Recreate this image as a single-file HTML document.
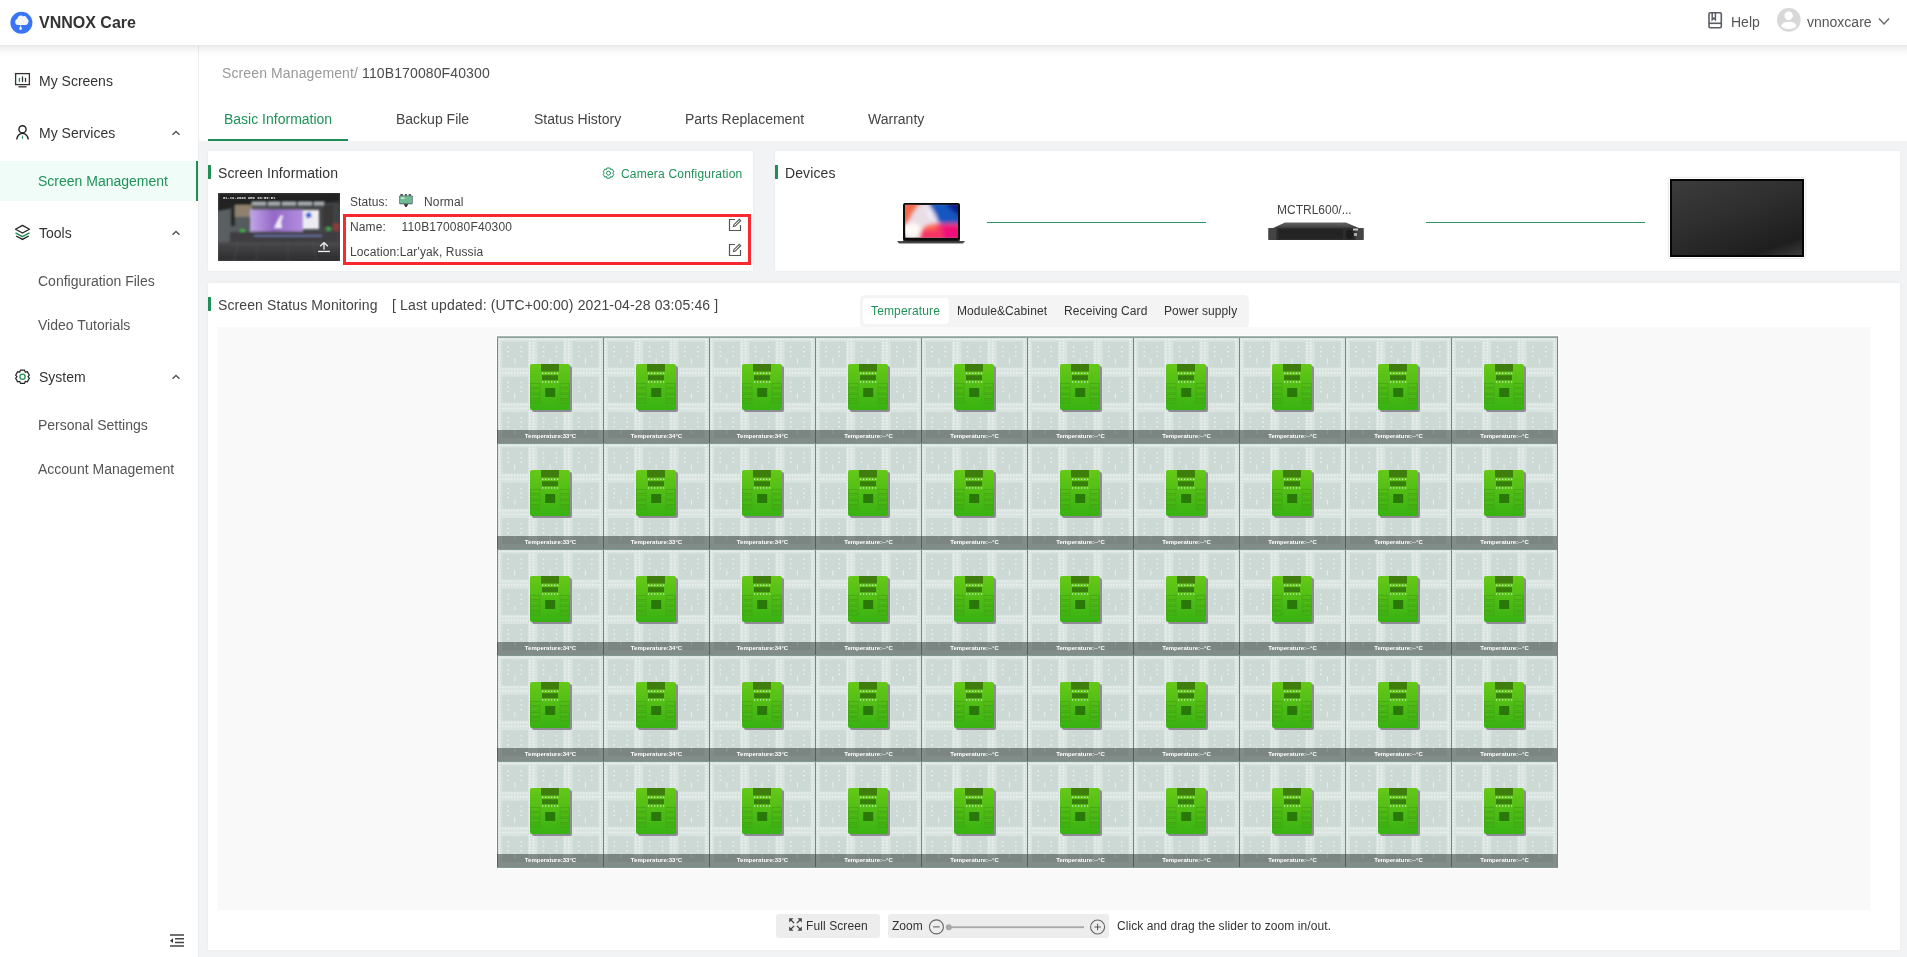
<!DOCTYPE html>
<html><head><meta charset="utf-8">
<style>
*{box-sizing:border-box;margin:0;padding:0}
html,body{will-change:transform;width:1907px;height:957px;overflow:hidden;background:#f2f3f5;font-family:"Liberation Sans",sans-serif;color:#333}
.abs{position:absolute}
.t{position:absolute;white-space:nowrap;line-height:1}
#hdr{position:absolute;left:0;top:0;width:1907px;height:45px;background:#fff;z-index:5}
#hsh{position:absolute;left:0;top:45px;width:1907px;height:12px;z-index:5;background:linear-gradient(rgba(20,30,30,.10),rgba(20,30,30,.06) 25%,rgba(20,30,30,.02) 60%,rgba(20,30,30,0))}
#side{position:absolute;left:0;top:45px;width:199px;height:912px;background:#fff;border-right:1px solid #ededf0;z-index:3}
#topw{position:absolute;left:199px;top:45px;width:1708px;height:96px;background:#fff}
.card{position:absolute;background:#fff;box-shadow:0 0 3px rgba(0,0,0,.05)}
.bar{position:absolute;width:3px;height:14px;background:#1f8f57}
.grn{color:#1f9258}
.s14{font-size:14px}
.s12{font-size:12px}
</style></head><body>
<!-- HEADER -->
<div id="hdr">
  <svg class="abs" style="left:10px;top:11px" width="23" height="24" viewBox="0 0 23 24">
    <circle cx="11.4" cy="11.7" r="11" fill="#3873f8"/>
    <path d="M7.8 13.9c-1.6 0-2.6-1.3-2.6-3 0-1.6.9-2.8 2.2-3.1.3-1.9 1.6-3.4 3.3-3.4 1 0 1.8.5 2.3 1.1.4-.3.9-.4 1.4-.4 1.3 0 2.3 1 2.5 2.3 1 .4 1.6 1.5 1.6 2.8 0 2-1.2 3.7-3 3.7z" fill="#f4f5f7"/>
    <path d="M10.6 13.5v2.2" stroke="#eef" stroke-width=".6"/>
    <path d="M10.6 15.3c.9 1 1.3 1.7 1.3 2.3a1.3 1.3 0 0 1-2.6 0c0-.6.4-1.3 1.3-2.3z" fill="#fff"/>
  </svg>
  <div class="t" style="left:39px;top:15px;font-size:16px;font-weight:bold;color:#333">VNNOX Care</div>
  <svg class="abs" style="left:1707px;top:11px" width="16" height="18" viewBox="0 0 16 18">
    <rect x="2" y="1.8" width="12.3" height="14.9" rx="1.2" fill="none" stroke="#5a5d63" stroke-width="1.6"/>
    <path d="M2 12.3h12.3" stroke="#5a5d63" stroke-width="1.6"/>
    <path d="M5.2 1.8v6.9l1.6-1.6 1.6 1.6V1.8" fill="none" stroke="#5a5d63" stroke-width="1.5"/>
  </svg>
  <div class="t s14" style="left:1731px;top:15px;color:#555">Help</div>
  <svg class="abs" style="left:1777px;top:8px" width="24" height="24" viewBox="0 0 24 24">
    <circle cx="11.8" cy="11.9" r="11.9" fill="#d8d8d8"/>
    <circle cx="11.7" cy="7.7" r="4.2" fill="#fff"/>
    <ellipse cx="11.8" cy="17.4" rx="7.4" ry="3.7" fill="#fff"/>
  </svg>
  <div class="t s14" style="left:1807px;top:15px;color:#555">vnnoxcare</div>
  <svg class="abs" style="left:1878px;top:17px" width="12" height="9" viewBox="0 0 12 9">
    <path d="M1 1.5l5 5.5 5-5.5" fill="none" stroke="#666" stroke-width="1.3"/>
  </svg>
</div>

<div id="hsh"></div>
<!-- SIDEBAR -->
<div id="side">
  <div class="abs" style="left:0;top:116px;width:196px;height:40px;background:#effcf8"></div>
  <div class="abs" style="left:196px;top:116px;width:2px;height:40px;background:#1f8f57"></div>
</div>
<div class="t s14" style="left:39px;top:74px;z-index:4">My Screens</div>
<div class="t s14" style="left:39px;top:126px;z-index:4">My Services</div>
<div class="t s14 grn" style="left:38px;top:174px;z-index:4">Screen Management</div>
<div class="t s14" style="left:39px;top:226px;z-index:4">Tools</div>
<div class="t s14" style="left:38px;top:274px;z-index:4;color:#555">Configuration Files</div>
<div class="t s14" style="left:38px;top:318px;z-index:4;color:#555">Video Tutorials</div>
<div class="t s14" style="left:39px;top:370px;z-index:4">System</div>
<div class="t s14" style="left:38px;top:418px;z-index:4;color:#555">Personal Settings</div>
<div class="t s14" style="left:38px;top:462px;z-index:4;color:#555">Account Management</div>


<!-- SIDEBAR ICONS -->
<svg class="abs" style="left:14px;top:72px;z-index:4" width="17" height="17" viewBox="0 0 17 17">
  <rect x="1.6" y="1.6" width="13.8" height="11" fill="none" stroke="#333" stroke-width="1.3"/>
  <path d="M4.5 17h8" stroke="#555" stroke-width="1.6" transform="translate(0,-2.2)"/>
  <path d="M5.4 6.5v3" stroke="#1f8f57" stroke-width="1.3" stroke-linecap="round"/>
  <path d="M8.5 5v4.5" stroke="#333" stroke-width="1.3" stroke-linecap="round"/>
  <path d="M11.5 6.5v3" stroke="#333" stroke-width="1.3" stroke-linecap="round"/>
</svg>
<svg class="abs" style="left:14px;top:124px;z-index:4" width="17" height="17" viewBox="0 0 17 17">
  <circle cx="8.5" cy="5.3" r="3.6" fill="none" stroke="#222" stroke-width="1.4"/>
  <path d="M2.8 15.6c0-3.6 2.5-6.2 5.7-6.2s5.7 2.6 5.7 6.2" fill="none" stroke="#222" stroke-width="1.4"/>
  <path d="M8.5 10.8l.7 2.8-.7 2-.7-2z" fill="#1f8f57"/>
</svg>
<svg class="abs" style="left:14px;top:224px;z-index:4" width="17" height="17" viewBox="0 0 17 17">
  <path d="M1.5 5.2l7-3.8 7 3.8-7 3.8z" fill="none" stroke="#222" stroke-width="1.3" stroke-linejoin="round"/>
  <path d="M1.5 8.8l7 3.8 7-3.8" fill="none" stroke="#1f8f57" stroke-width="1.5"/>
  <path d="M2.2 12l6.3 3.4 6.3-3.4" fill="none" stroke="#222" stroke-width="1.3"/>
</svg>
<svg class="abs" style="left:14px;top:368px;z-index:4" width="17" height="17" viewBox="0 0 17 17">
  <path d="M6.4 2.2h4.2l.7 2 2-.6 2.1 3.6-1.4 1.5 1.4 1.6-2.1 3.6-2-.6-.7 2H6.4l-.7-2-2 .6-2.1-3.6 1.4-1.6-1.4-1.5 2.1-3.6 2 .6z" fill="none" stroke="#222" stroke-width="1.2" stroke-linejoin="round"/>
  <circle cx="8.5" cy="8.7" r="2.6" fill="none" stroke="#1f8f57" stroke-width="1.3"/>
</svg>
<svg class="abs" style="left:171px;top:129px;z-index:4" width="10" height="8" viewBox="0 0 10 8"><path d="M1.5 5.8L5 2.5l3.5 3.3" fill="none" stroke="#555" stroke-width="1.5"/></svg>
<svg class="abs" style="left:171px;top:229px;z-index:4" width="10" height="8" viewBox="0 0 10 8"><path d="M1.5 5.8L5 2.5l3.5 3.3" fill="none" stroke="#555" stroke-width="1.5"/></svg>
<svg class="abs" style="left:171px;top:373px;z-index:4" width="10" height="8" viewBox="0 0 10 8"><path d="M1.5 5.8L5 2.5l3.5 3.3" fill="none" stroke="#555" stroke-width="1.5"/></svg>
<svg class="abs" style="left:169px;top:933px;z-index:4" width="16" height="14" viewBox="0 0 16 14">
  <path d="M1 2h14M6 5.8h9M6 9.6h9M1 13h14" stroke="#444" stroke-width="1.5"/>
  <path d="M1 7.7l3-2.4v4.8z" fill="#333"/>
</svg>

<!-- TOP WHITE STRIP -->
<div id="topw">
  <div class="abs" style="left:9px;top:94px;width:140px;height:2px;background:#1f8f57"></div>
</div>
<div class="t s14" style="left:222px;top:66px;color:#999;letter-spacing:.12px">Screen Management/ <span style="color:#4a4a4a">110B170080F40300</span></div>
<div class="t s14 grn" style="left:224px;top:112px">Basic Information</div>
<div class="t s14" style="left:396px;top:112px;color:#444">Backup File</div>
<div class="t s14" style="left:534px;top:112px;color:#444">Status History</div>
<div class="t s14" style="left:685px;top:112px;color:#444">Parts Replacement</div>
<div class="t s14" style="left:868px;top:112px;color:#444">Warranty</div>

<!-- CARD 1 -->
<div class="card" style="left:208px;top:151px;width:545px;height:120px"></div>
<!-- CARD 2 -->
<div class="card" style="left:775px;top:151px;width:1125px;height:120px"></div>
<!-- CARD 3 -->
<div class="card" style="left:208px;top:283px;width:1692px;height:667px"></div>


<!-- CARD 1 CONTENT -->
<div class="bar" style="left:208px;top:165px"></div>
<div class="t s14" style="left:218px;top:166px;color:#333;letter-spacing:.1px">Screen Information</div>
<svg class="abs" style="left:602px;top:167px" width="13" height="13" viewBox="0 0 13 13">
  <path d="M4.9 1h3.2l.5 1.6 1.6-.5 1.6 2.8-1.1 1.2 1.1 1.2-1.6 2.8-1.6-.5-.5 1.6H4.9l-.5-1.6-1.6.5L1.2 7.3l1.1-1.2-1.1-1.2 1.6-2.8 1.6.5z" fill="none" stroke="#1f8f57" stroke-width="1" stroke-linejoin="round"/>
  <circle cx="6.5" cy="6.1" r="2" fill="none" stroke="#1f8f57" stroke-width="1"/>
</svg>
<div class="t s12 grn" style="left:621px;top:168px;letter-spacing:.2px">Camera Configuration</div>
<div class="abs" style="left:218px;top:193px;width:122px;height:68px;overflow:hidden;background:#3a3c3e">
  <svg width="122" height="68" viewBox="0 0 122 68">
    <defs>
      <linearGradient id="ph" x1="0" y1="0" x2="1" y2="0"><stop offset="0" stop-color="#5c6264"/><stop offset=".5" stop-color="#4c5052"/><stop offset="1" stop-color="#3e4244"/></linearGradient>
      <linearGradient id="pu" x1="0" y1="0" x2="1" y2="0"><stop offset="0" stop-color="#c2a6e6"/><stop offset=".45" stop-color="#9468c8"/><stop offset="1" stop-color="#b48ee0"/></linearGradient>
      <linearGradient id="fl" x1="0" y1="0" x2="0" y2="1"><stop offset="0" stop-color="#4a4a4c"/><stop offset="1" stop-color="#2c2c2e"/></linearGradient>
      <filter id="bl" x="-10%" y="-10%" width="120%" height="120%"><feGaussianBlur stdDeviation="1"/></filter>
    </defs>
    <rect width="122" height="68" fill="url(#ph)"/>
    <g filter="url(#bl)">
      <path d="M0 0h122v9c-30 2-60 2-90 4-12 1-22 3-32 5z" fill="#232324"/>
      <rect x="34" y="9" width="72" height="3.5" fill="#a9aeb2"/>
      <rect x="48" y="8" width="2" height="6" fill="#222"/><rect x="62" y="8" width="2" height="6" fill="#222"/><rect x="78" y="8" width="2" height="6" fill="#222"/><rect x="94" y="8" width="2" height="6" fill="#222"/>
      <rect x="17" y="12" width="17" height="12" fill="#8f806e"/>
      <rect x="13" y="13" width="4" height="20" fill="#2a2a2a"/>
      <rect x="105" y="12" width="10" height="22" fill="#3a3838"/>
      <rect x="115" y="30" width="7" height="8" fill="#8a3a3a"/>
      <rect x="32" y="16.5" width="53" height="22" fill="url(#pu)"/>
      <path d="M56 35l4-8 3-5 2 1-2 6 1 6z" fill="#f0eaf8"/>
      <rect x="85" y="17" width="16" height="19" fill="#ececf2"/>
      <rect x="88" y="20" width="5" height="5" fill="#3a5fd0" transform="rotate(-20 90 22)"/>
      <rect x="22" y="36" width="5" height="3" fill="#3bb54a"/>
      <rect x="108" y="34.5" width="5" height="3" fill="#3bb54a"/>
      <path d="M12 39h108v10H12z" fill="#403e42"/>
      <rect x="36" y="42" width="68" height="1.6" fill="#6a78a8"/>
      <rect x="0" y="49" width="122" height="19" fill="url(#fl)"/>
      <path d="M20 49l-4 19M40 49l-2 19M70 49v19M95 49l3 19" stroke="#555" stroke-width="1" opacity=".5"/>
    </g>
    <text x="5" y="6" font-size="3.8" fill="#e8e8e8" font-family="Liberation Mono" font-weight="bold">01-12-2020 WED 20:59:51</text>
    <path d="M106 49.5l-3.8 3.8M106 49.5l3.8 3.8M106 49.5v7" stroke="#f2f2f2" stroke-width="1.3"/>
    <rect x="100" y="57.8" width="12" height="1.3" fill="#f2f2f2"/>
  </svg>
</div>
<div class="t s12" style="left:350px;top:196px;color:#444;letter-spacing:.1px">Status:</div>
<svg class="abs" style="left:399px;top:193px" width="14" height="15" viewBox="0 0 14 15">
  <g fill="#4a5560"><rect x="1.2" y="1" width="2.8" height="1.8" rx=".5"/><rect x="5.8" y="1" width="2.2" height="1.8" rx=".5"/><rect x="9.6" y="1" width="2.4" height="1.8" rx=".5"/></g>
  <rect x=".3" y="2.4" width="13.4" height="8.8" rx=".9" fill="#4d5a63"/>
  <rect x="1" y="3.2" width="12" height="7.2" fill="#70bb94"/>
  <rect x="2" y="4.2" width="3.6" height="1.8" fill="#c5e4d3"/>
  <path d="M5 11.2h4v1.2H7.8V14H6.2v-1.6H5z" fill="#1e1e1e"/>
</svg>
<div class="t s12" style="left:424px;top:196px;color:#444;letter-spacing:.15px">Normal</div>
<div class="abs" style="left:343px;top:214px;width:408px;height:51px;border:3px solid #f8292f"></div>
<div class="t s12" style="left:350px;top:221px;color:#444;letter-spacing:.1px">Name:</div>
<div class="t s12" style="left:401.5px;top:221px;color:#444;letter-spacing:.17px">110B170080F40300</div>
<div class="t s12" style="left:350px;top:246px;color:#444;letter-spacing:.12px">Location:Lar'yak, Russia</div>
<svg class="abs" style="left:728px;top:218px" width="14" height="14" viewBox="0 0 14 14">
  <path d="M7 1.5H1.5v11h11V7" fill="none" stroke="#555" stroke-width="1.2"/>
  <path d="M5.5 8.5l.4-1.8L11.3 1.3l1.4 1.4-5.4 5.4z" fill="none" stroke="#555" stroke-width="1.1"/>
</svg>
<svg class="abs" style="left:728px;top:243px" width="14" height="14" viewBox="0 0 14 14">
  <path d="M7 1.5H1.5v11h11V7" fill="none" stroke="#555" stroke-width="1.2"/>
  <path d="M5.5 8.5l.4-1.8L11.3 1.3l1.4 1.4-5.4 5.4z" fill="none" stroke="#555" stroke-width="1.1"/>
</svg>


<!-- CARD 2 CONTENT -->
<div class="bar" style="left:775px;top:165px"></div>
<div class="t s14" style="left:785px;top:166px;color:#333;letter-spacing:.1px">Devices</div>
<svg class="abs" style="left:896px;top:202px" width="70" height="42" viewBox="0 0 70 42">
  <defs>
    <clipPath id="lcl"><rect x="9.2" y="2.8" width="52.8" height="33"/></clipPath>
    <filter id="lbl" x="-20%" y="-20%" width="140%" height="140%"><feGaussianBlur stdDeviation="2.2"/></filter>
  </defs>
  <rect x="7" y="1" width="57" height="38" rx="2" fill="#0c0c0c"/>
  <g clip-path="url(#lcl)">
    <rect x="9.2" y="2.8" width="52.8" height="33" fill="#e9dde6"/>
    <g filter="url(#lbl)">
      <path d="M5 0h20c-6 6-10 12-14 22H5z" fill="#f2664a"/>
      <path d="M32 0h35v25c-6-3-12-4-22-2C40 15 36 8 32 0z" fill="#1657c0"/>
      <path d="M48 0h19v14c-6-1-12-5-19-14z" fill="#0a1c90"/>
      <path d="M24 31c3-7 10-9 20-9 9 0 15-1 23 1v17H24z" fill="#f43566"/>
      <path d="M46 24c8-1 14 0 21 1v15H48z" fill="#f0107c"/>
      <path d="M26 28c4-4 9-5 15-5l-1 5z" fill="#ff6a3c"/>
      <ellipse cx="16" cy="28" rx="9" ry="7" fill="#fffaf6"/>
      <path d="M30 4c3 0 8 6 10 12l-6 2c-2-5-4-9-4-14z" fill="#f0eef8"/>
    </g>
  </g>
  <path d="M1 39h68l-2 2.5H3z" fill="#4a4a4c"/>
  <rect x="7" y="38.5" width="57" height="1.2" fill="#2a2a2a"/>
</svg>
<div class="abs" style="left:987px;top:222px;width:219px;height:1px;background:#2e9563"></div>
<div class="t s12" style="left:1277px;top:204px;color:#444">MCTRL600/...</div>
<svg class="abs" style="left:1267px;top:221px" width="98" height="20" viewBox="0 0 98 20">
  <defs><linearGradient id="cg" x1="0" y1="0" x2="0" y2="1"><stop offset="0" stop-color="#666"/><stop offset="1" stop-color="#3a3a3a"/></linearGradient></defs>
  <path d="M18 1.5h61l14 6H5z" fill="url(#cg)"/>
  <rect x="1.5" y="7" width="95" height="12" rx="1" fill="#2c2c2c"/>
  <rect x="1.5" y="7" width="8" height="12" fill="#444"/>
  <rect x="88.5" y="7" width="8" height="12" fill="#444"/>
  <rect x="12" y="8.5" width="64" height="9" fill="#232323"/>
  <rect x="79" y="9" width="7" height="9" rx="3" fill="#1c1c1c"/>
  <rect x="86" y="7.5" width="5" height="2" fill="#ccc"/>
  <rect x="87" y="12" width="3" height="3" fill="#aaa"/>
</svg>
<div class="abs" style="left:1426px;top:222px;width:219px;height:1px;background:#2e9563"></div>
<div class="abs" style="left:1669px;top:178px;width:136px;height:80px;background:#fff;box-shadow:0 0 2px rgba(0,0,0,.25)"></div>
<div class="abs" style="left:1670px;top:179px;width:134px;height:78px;background:#050505;padding:2px">
  <div style="width:130px;height:74px;background:linear-gradient(160deg,#3c3c3c 0%,#2e2e2e 45%,#1e1e1e 85%,#3a3a3a 100%)"></div>
</div>


<!-- CARD 3 CONTENT -->
<div class="bar" style="left:208px;top:297px;height:14px"></div>
<div class="t s14" style="left:218px;top:298px;color:#444;letter-spacing:.1px">Screen Status Monitoring</div>
<div class="t s14" style="left:392px;top:298px;color:#444;letter-spacing:.14px">[ Last updated: (UTC+00:00) 2021-04-28 03:05:46 ]</div>
<div class="abs" style="left:860px;top:295px;width:389px;height:33px;background:#f4f4f5;border-radius:5px"></div>
<div class="abs" style="left:863px;top:298px;width:86px;height:26px;background:#fff;border-radius:4px"></div>
<div class="t s12 grn" style="left:871px;top:305px;letter-spacing:.15px">Temperature</div>
<div class="t s12" style="left:957px;top:305px;color:#333;letter-spacing:.1px">Module&amp;Cabinet</div>
<div class="t s12" style="left:1064px;top:305px;color:#333;letter-spacing:.1px">Receiving Card</div>
<div class="t s12" style="left:1164px;top:305px;color:#333;letter-spacing:.1px">Power supply</div>
<div class="abs" style="left:218px;top:327px;width:1652px;height:583px;background:#f9f9fa"></div>
<div class="abs" style="left:496px;top:335px;width:1062px;height:534px;background:#fff"></div>
<div class="abs" style="left:497px;top:336px;width:1061px;height:1px;background:#a7b7b0"></div>
<svg class="abs" style="left:497px;top:337px" width="1061" height="531" viewBox="0 0 1061 531">
  <defs>
    <g id="sm">
      <rect x="0" y="0" width="26" height="26" fill="#ccd9d4"/>
      <g fill="#e9f0ed">
        <rect x="5.5" y="5" width="1.5" height="1.5"/><rect x="5.5" y="9.5" width="1.5" height="1.5"/><rect x="5.5" y="14" width="1.5" height="1.5"/>
        <rect x="18.5" y="5" width="1.5" height="1.5"/><rect x="18.5" y="9.5" width="1.5" height="1.5"/><rect x="18.5" y="14" width="1.5" height="1.5"/>
        <rect x="12.3" y="17" width="1" height="5"/>
      </g>
    </g>
    <linearGradient id="gi" x1="0" y1="0" x2="0" y2="1"><stop offset="0" stop-color="#66c817"/><stop offset="1" stop-color="#38b212"/></linearGradient>
    <pattern id="cell" width="106" height="106" patternUnits="userSpaceOnUse">
      <rect width="106" height="106" fill="#d9e3df"/>
      <g stroke="#f2f6f4" stroke-width="1.3" stroke-dasharray="1.5 1.5" opacity=".85">
        <path d="M2.5 2v91M32.7 2v91M36.5 2v91M68 2v91M71.8 2v91M103.3 2v91"/>
        <path d="M2 2.3h102M2 32.2h102M2 36h102M2 67.5h102M2 71.3h102"/>
      </g>
      <use href="#sm" x="5.0" y="4.5"/><use href="#sm" x="5.0" y="39.8"/><use href="#sm" x="5.0" y="75.1"/><use href="#sm" x="40.3" y="4.5"/><use href="#sm" x="40.3" y="39.8"/><use href="#sm" x="40.3" y="75.1"/><use href="#sm" x="75.6" y="4.5"/><use href="#sm" x="75.6" y="39.8"/><use href="#sm" x="75.6" y="75.1"/>
      <rect x="35" y="29" width="40" height="46" rx="2" fill="#8c8c92"/>
      <rect x="33" y="27" width="40" height="46" rx="2" fill="url(#gi)"/>
      <g fill="none" stroke="#3c8a10" stroke-width=".8" opacity=".45">
        <rect x="33.5" y="46.5" width="9.5" height="4"/><rect x="33.5" y="52" width="9.5" height="4"/><rect x="33.5" y="57.5" width="9.5" height="4"/><rect x="33.5" y="63" width="9.5" height="3"/>
        <rect x="63" y="46.5" width="9.5" height="4"/><rect x="63" y="52" width="9.5" height="4"/><rect x="63" y="57.5" width="9.5" height="4"/><rect x="63" y="63" width="9.5" height="3"/>
      </g>
      <rect x="44" y="27" width="18" height="7.5" fill="#3f7d0d"/>
      <rect x="45" y="38.2" width="16" height="5" fill="#387e0d"/>
      <rect x="48.2" y="51" width="10" height="9" fill="#2a780a"/>
      <g fill="#cfeec0">
        <rect x="45" y="35.6" width="1.3" height="1.3"/><rect x="48" y="35.6" width="1.3" height="1.3"/><rect x="51" y="35.6" width="1.3" height="1.3"/><rect x="54" y="35.6" width="1.3" height="1.3"/><rect x="57" y="35.6" width="1.3" height="1.3"/><rect x="60" y="35.6" width="1.3" height="1.3"/>
        <rect x="45" y="44.3" width="1.3" height="1.3"/><rect x="48" y="44.3" width="1.3" height="1.3"/><rect x="51" y="44.3" width="1.3" height="1.3"/><rect x="54" y="44.3" width="1.3" height="1.3"/><rect x="57" y="44.3" width="1.3" height="1.3"/><rect x="60" y="44.3" width="1.3" height="1.3"/>
      </g>
      <rect x="0" y="93" width="106" height="13" fill="#1c2622" opacity=".46"/>
      <rect x="0" y="0" width="1" height="106" fill="#6e8a81"/>
      <rect x="0" y="0" width="106" height="1" fill="#7f9890"/>
      <rect x="0" y="93" width="1" height="13" fill="#4f605a"/>
    </pattern>
  </defs>
  <rect width="1061" height="531" fill="url(#cell)"/>
  <rect x="0" y="0" width="1061" height="1" fill="#8ea39b"/>
  <rect x="1060" y="0" width="1" height="531" fill="#6e8a81"/>
  <rect x="0" y="530" width="1061" height="1" fill="#7f9890"/>
  <g font-family="Liberation Sans" font-size="6" font-weight="bold" fill="#fff" text-anchor="middle">
<text x="53.5" y="101.3">Temperature:33°C</text>
<text x="159.5" y="101.3">Temperature:34°C</text>
<text x="265.5" y="101.3">Temperature:34°C</text>
<text x="371.5" y="101.3">Temperature:--°C</text>
<text x="477.5" y="101.3">Temperature:--°C</text>
<text x="583.5" y="101.3">Temperature:--°C</text>
<text x="689.5" y="101.3">Temperature:--°C</text>
<text x="795.5" y="101.3">Temperature:--°C</text>
<text x="901.5" y="101.3">Temperature:--°C</text>
<text x="1007.5" y="101.3">Temperature:--°C</text>
<text x="53.5" y="207.3">Temperature:33°C</text>
<text x="159.5" y="207.3">Temperature:33°C</text>
<text x="265.5" y="207.3">Temperature:34°C</text>
<text x="371.5" y="207.3">Temperature:--°C</text>
<text x="477.5" y="207.3">Temperature:--°C</text>
<text x="583.5" y="207.3">Temperature:--°C</text>
<text x="689.5" y="207.3">Temperature:--°C</text>
<text x="795.5" y="207.3">Temperature:--°C</text>
<text x="901.5" y="207.3">Temperature:--°C</text>
<text x="1007.5" y="207.3">Temperature:--°C</text>
<text x="53.5" y="313.3">Temperature:34°C</text>
<text x="159.5" y="313.3">Temperature:34°C</text>
<text x="265.5" y="313.3">Temperature:34°C</text>
<text x="371.5" y="313.3">Temperature:--°C</text>
<text x="477.5" y="313.3">Temperature:--°C</text>
<text x="583.5" y="313.3">Temperature:--°C</text>
<text x="689.5" y="313.3">Temperature:--°C</text>
<text x="795.5" y="313.3">Temperature:--°C</text>
<text x="901.5" y="313.3">Temperature:--°C</text>
<text x="1007.5" y="313.3">Temperature:--°C</text>
<text x="53.5" y="419.3">Temperature:34°C</text>
<text x="159.5" y="419.3">Temperature:34°C</text>
<text x="265.5" y="419.3">Temperature:33°C</text>
<text x="371.5" y="419.3">Temperature:--°C</text>
<text x="477.5" y="419.3">Temperature:--°C</text>
<text x="583.5" y="419.3">Temperature:--°C</text>
<text x="689.5" y="419.3">Temperature:--°C</text>
<text x="795.5" y="419.3">Temperature:--°C</text>
<text x="901.5" y="419.3">Temperature:--°C</text>
<text x="1007.5" y="419.3">Temperature:--°C</text>
<text x="53.5" y="525.3">Temperature:33°C</text>
<text x="159.5" y="525.3">Temperature:33°C</text>
<text x="265.5" y="525.3">Temperature:33°C</text>
<text x="371.5" y="525.3">Temperature:--°C</text>
<text x="477.5" y="525.3">Temperature:--°C</text>
<text x="583.5" y="525.3">Temperature:--°C</text>
<text x="689.5" y="525.3">Temperature:--°C</text>
<text x="795.5" y="525.3">Temperature:--°C</text>
<text x="901.5" y="525.3">Temperature:--°C</text>
<text x="1007.5" y="525.3">Temperature:--°C</text>
  </g>
</svg>
<!-- BOTTOM CONTROLS -->
<div class="abs" style="left:776px;top:914px;width:104px;height:24px;background:#ededed;border-radius:3px"></div>
<svg class="abs" style="left:788px;top:917px" width="15" height="15" viewBox="0 0 15 15">
  <g fill="#444"><path d="M1.2 1.2h4.3L1.2 5.5z"/><path d="M13.8 1.2H9.5l4.3 4.3z"/><path d="M1.2 13.8h4.3L1.2 9.5z"/><path d="M13.8 13.8H9.5l4.3-4.3z"/></g>
  <path d="M2.5 2.5l3.6 3.6M12.5 2.5L8.9 6.1M2.5 12.5l3.6-3.6M12.5 12.5L8.9 8.9" stroke="#444" stroke-width="1.3"/>
</svg>
<div class="t s12" style="left:806px;top:920px;color:#333;letter-spacing:.1px">Full Screen</div>
<div class="abs" style="left:888px;top:914px;width:221px;height:24px;background:#ededed;border-radius:3px"></div>
<div class="t s12" style="left:892px;top:920px;color:#333">Zoom</div>
<svg class="abs" style="left:928px;top:917.5px" width="180" height="18" viewBox="0 0 180 18">
  <circle cx="8.4" cy="8.9" r="7" fill="none" stroke="#666" stroke-width="1.1"/>
  <path d="M5.2 8.9h6.4" stroke="#555" stroke-width="1"/>
  <rect x="20" y="8.3" width="136" height="1.8" fill="#a8a8a8"/>
  <circle cx="20.8" cy="9.2" r="3" fill="#a8a8a8"/>
  <circle cx="169.6" cy="9" r="7" fill="none" stroke="#666" stroke-width="1.1"/>
  <path d="M166.4 9h6.4M169.6 5.8v6.4" stroke="#555" stroke-width="1"/>
</svg>
<div class="t s12" style="left:1117px;top:920px;color:#333;letter-spacing:.08px">Click and drag the slider to zoom in/out.</div>

</body></html>
